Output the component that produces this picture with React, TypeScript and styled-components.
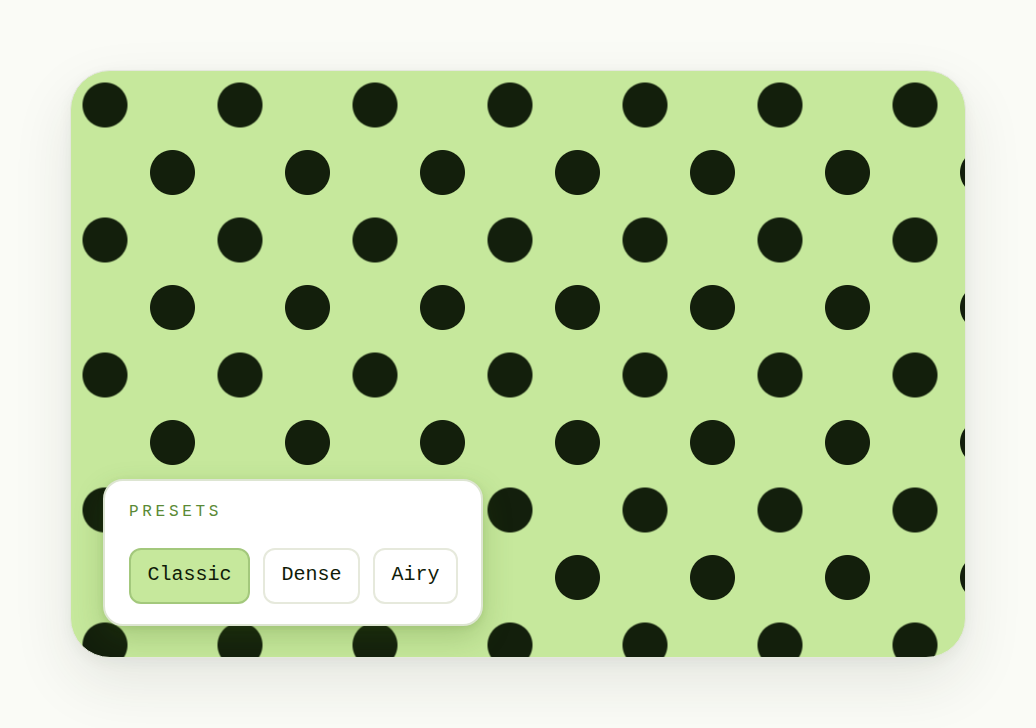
import React, { useState } from "react";
import styled, { createGlobalStyle } from "styled-components";

const Global = createGlobalStyle`
  html, body { margin: 0; padding: 0; }
  body {
    background: #fafbf6;
    font-family: "Liberation Mono", "DejaVu Sans Mono", monospace;
  }
  #root { width: 1036px; height: 728px; }
`;

const Stage = styled.div`
  width: 1036px;
  height: 728px;
  display: flex;
  align-items: center;
  justify-content: center;
  box-sizing: border-box;
`;

const Card = styled.div`
  position: relative;
  width: 896px;
  height: 588px;
  box-sizing: border-box;
  border: 1px solid #e4e7dd;
  border-radius: 40px;
  overflow: hidden;
  background-color: #c6e89c;
  background-image:
    radial-gradient(circle at center, #131f0c 22px, rgba(19, 31, 12, 0) 23px),
    radial-gradient(circle at center, #131f0c 22px, rgba(19, 31, 12, 0) 23px);
  background-size: 135px 135px, 135px 135px;
  background-position: -33.5px -33.5px, 34px 34px;
  box-shadow: 0 24px 60px rgba(40, 50, 30, 0.1), 0 4px 14px rgba(40, 50, 30, 0.05);
`;

const Panel = styled.div`
  position: absolute;
  left: 32px;
  bottom: 31px;
  width: 380px;
  box-sizing: border-box;
  padding: 21px 24px 20px;
  background: #ffffff;
  border: 2px solid #dde5d2;
  border-radius: 20px;
  box-shadow: 0 12px 30px rgba(60, 100, 20, 0.22), 0 2px 6px rgba(60, 100, 20, 0.1);
  display: flex;
  flex-direction: column;
  gap: 26px;
`;

const Label = styled.div`
  font-size: 16px;
  line-height: 20px;
  letter-spacing: 3.7px;
  color: #5a8a36;
  text-transform: uppercase;
`;

const Row = styled.div`
  display: flex;
  gap: 13px;
`;

const Preset = styled.button<{ $active?: boolean }>`
  font-family: "Liberation Mono", "DejaVu Sans Mono", monospace;
  font-size: 20px;
  line-height: 22px;
  height: 56px;
  padding: 0 16.5px 3px;
  border-radius: 12px;
  color: #0f1b08;
  cursor: pointer;
  border: 2px solid ${(p) => (p.$active ? "#a3c87c" : "#e6e9dc")};
  background: ${(p) => (p.$active ? "#c6e89c" : "#ffffff")};
`;

const presets = ["Classic", "Dense", "Airy"];

export default function App() {
  const [active, setActive] = useState("Classic");
  return (
    <>
      <Global />
      <Stage>
        <Card>
          <Panel>
            <Label>Presets</Label>
            <Row>
              {presets.map((p) => (
                <Preset key={p} $active={p === active} onClick={() => setActive(p)}>
                  {p}
                </Preset>
              ))}
            </Row>
          </Panel>
        </Card>
      </Stage>
    </>
  );
}
